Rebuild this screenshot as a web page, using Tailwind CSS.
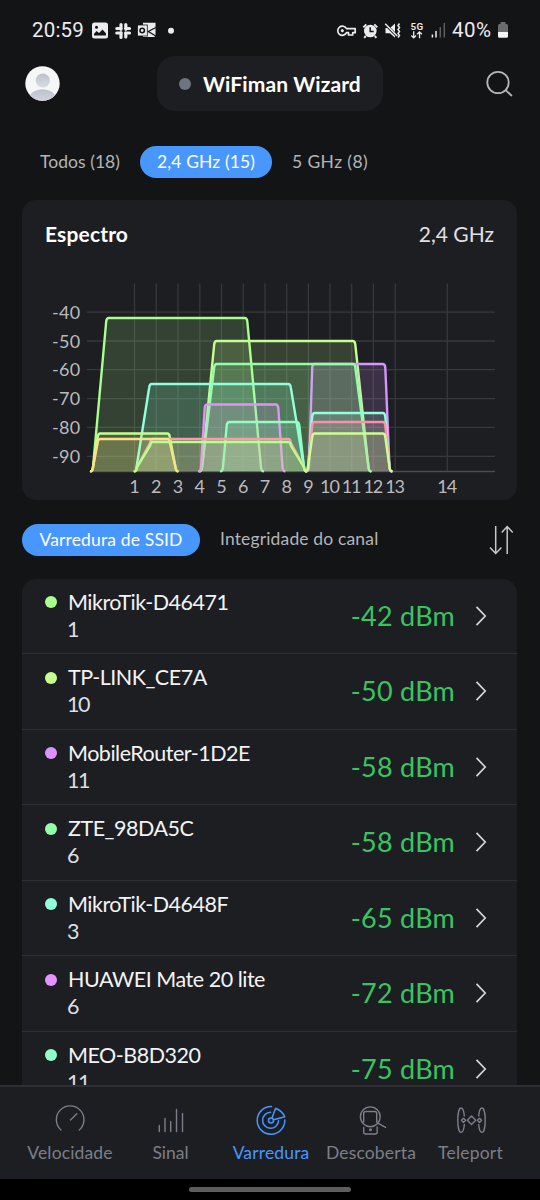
<!DOCTYPE html>
<html lang="pt">
<head>
<meta charset="utf-8">
<title>WiFiman</title>
<script src="https://cdn.jsdelivr.net/npm/@tailwindcss/browser@4"></script>
</head>
<body class="bg-black">
<div class="w-[540px] h-[1200px] overflow-hidden flex flex-col bg-[#131416] font-['Lato','Noto_Sans',sans-serif] text-[#f2f3f5]">

  <!-- Status bar -->
  <div class="h-14 shrink-0 flex items-center pt-1 pl-8 pr-[31px] font-['Roboto',sans-serif] text-[20.5px] text-[#ececee]">
    <span class="w-[53px] whitespace-nowrap tracking-[0.200px]">20:59</span>
    <svg class="ml-[6px] shrink-0" width="90" height="20" viewBox="91 20 90 20">
      <path fill="#ececee" fill-rule="evenodd" d="M94.500 22.500h11a2.500 2.500 0 0 1 2.500 2.500v11a2.500 2.500 0 0 1-2.500 2.500h-11a2.500 2.500 0 0 1-2.500-2.500v-11a2.500 2.500 0 0 1 2.500-2.500zM94 35.500h12v-2l-3.500-4-3.500 3.500-2.500-2-2.500 3z"/>
      <circle cx="96.500" cy="27.300" r="1.500" fill="#131416"/>
      <g stroke="#ececee" stroke-width="3.200" stroke-linecap="round" fill="none">
        <path d="M121 24.500v4.800M125.800 24.500v4.800M116.800 28.500h4.500M116.800 33h4.500M121 32.600v4.800M125.800 32.800v4.200M125.500 28.500h4M125.500 33h4"/>
      </g>
      <path fill="#ececee" d="M143 22.800h12.500v12.500l-1 1.800h-11.500z"/>
      <path d="M155.800 27.500l-7.500 4 7.500 4.500" stroke="#131416" stroke-width="1.300" fill="none"/>
      <rect x="137.500" y="25" width="9.800" height="11" fill="#ececee" stroke="#131416" stroke-width=".8"/>
      <circle cx="142.200" cy="30.500" r="2.200" fill="none" stroke="#131416" stroke-width="1.600"/>
      <circle cx="171" cy="30.700" r="3" fill="#ececee"/>
    </svg>
    <svg class="ml-auto shrink-0" width="112" height="20" viewBox="336 20 112 20" fill="none">
      <g stroke="#ececee" stroke-width="1.700" stroke-linejoin="round">
        <path d="M346.500 28.700a4.600 4.600 0 1 0 0 4h2v2.300h4.200v-2.300h2.500v-4z"/>
        <circle cx="342.300" cy="30.700" r="1.200" fill="#ececee" stroke-width=".8"/>
      </g>
      <circle cx="370.300" cy="31" r="6.300" fill="#ececee"/>
      <path d="M363.300 27.300l3-3M377.300 27.300l-3-3M365.800 36l-1.600 1.800M374.800 36l1.600 1.800" stroke="#ececee" stroke-width="1.900"/>
      <path d="M370.200 27.300v4.200h3.500" stroke="#131416" stroke-width="1.500"/>
      <path d="M385.500 28h4.500l5-4.500v14.300l-5-4.500h-4.500z" fill="#ececee"/>
      <path d="M384.500 23.500l12.500 12.500" stroke="#131416" stroke-width="2.600"/>
      <path d="M385.200 23.800l12 12.200" stroke="#ececee" stroke-width="1.500"/>
      <path d="M399.500 23.500l-1.500 2 1.500 2-1.500 2 1.500 2-1.500 2 1.500 2-1.500 2" stroke="#ececee" stroke-width="1.500"/>
      <text x="410.400" y="29.600" font-size="9.800" font-weight="600" textLength="12.800" fill="#ececee">5G</text>
      <path d="M413.700 31.300v6.200M411.300 35.500l2.400 2.400 2.400-2.400M419.500 38.200v-6M417.100 34.200l2.400-2.400 2.400 2.400" stroke="#ececee" stroke-width="1.300"/>
      <path d="M432.400 34.500v3M436 31v6.500" stroke="#ececee" stroke-width="1.500"/>
      <path d="M440.300 27v10.500M444.300 23v14.500" stroke="#5c5d60" stroke-width="1.500"/>
    </svg>
    <span class="w-[45px] ml-1 whitespace-nowrap tracking-[0.500px]">40%</span>
    <svg class="shrink-0" width="12" height="20" viewBox="497 20 12 20">
      <path d="M500.500 22h5v2h1a1.500 1.500 0 0 1 1.500 1.500v7.500h-10v-7.500a1.500 1.500 0 0 1 1.500-1.500h1z" fill="#6b6c6f"/>
      <path d="M498 32h10v4.300a1.500 1.500 0 0 1-1.500 1.500h-7a1.500 1.500 0 0 1-1.500-1.500z" fill="#f4f4f5"/>
    </svg>
  </div>

  <!-- Header -->
  <header class="h-[55px] shrink-0 flex items-center justify-between pl-[25px] pr-[27px]">
    <svg width="35" height="35" viewBox="0 0 35 35">
      <defs>
        <clipPath id="av"><circle cx="17.500" cy="17.500" r="17.200"/></clipPath>
        <linearGradient id="ag" x1="0" y1="0" x2="0" y2="1"><stop offset="0" stop-color="#bcc1cb"/><stop offset="1" stop-color="#d9dce3"/></linearGradient>
      </defs>
      <g clip-path="url(#av)">
        <rect width="35" height="35" fill="#f5f6f8"/>
        <circle cx="17.800" cy="14.500" r="7.100" fill="url(#ag)"/>
        <ellipse cx="17.500" cy="32" rx="13" ry="8.800" fill="url(#ag)"/>
      </g>
    </svg>
    <div class="w-[226px] h-[55px] ml-[7px] mr-[12px] rounded-[18px] bg-[#1d1e22] flex items-center pl-[22px] gap-3">
      <span class="size-3 rounded-full bg-[#6e7580]"></span>
      <span class="text-[21px] font-bold whitespace-nowrap tracking-[0.100px] text-white">WiFiman Wizard</span>
    </div>
    <svg width="28" height="28" viewBox="485 70 28 28" fill="none" stroke="#b4b6b9" stroke-width="1.800" stroke-linecap="round">
      <circle cx="498" cy="82.500" r="10.700"/><path d="M505.800 90.300l5.600 5.200"/>
    </svg>
  </header>

  <!-- Band filter -->
  <div class="h-[33px] mt-[34px] shrink-0 flex items-center pl-[22px] text-[17.500px] leading-[33px] text-[#b3b5b9] whitespace-nowrap">
    <span class="w-[118px] pl-[18px] tracking-[0.050px]">Todos (18)</span>
    <span class="w-[132px] h-[32px] leading-[32px] rounded-full bg-[#4797ff] text-white text-center tracking-[0.100px]">2,4 GHz (15)</span>
    <span class="ml-5 tracking-[0.400px]">5 GHz (8)</span>
  </div>

  <!-- Spectrum card -->
  <section class="mx-[22px] mt-[22px] w-[495px] h-[300px] shrink-0 rounded-[14px] bg-[#1d1e22] flex flex-col">
    <div class="h-[70px] flex items-center justify-between px-[23px] pb-[2px] leading-[30px]">
      <h2 class="text-[21px] font-bold text-white tracking-[0.150px]">Espectro</h2>
      <span class="text-[21px] text-[#e0e1e3]">2,4 GHz</span>
    </div>
    <svg width="495" height="230" viewBox="22 270 495 230" id="chart" fill="none"></svg>
  </section>

  <!-- View switch -->
  <div class="h-[33px] mt-[23px] shrink-0 flex items-center pl-[22px] pr-[26px] text-[17.500px] whitespace-nowrap">
    <span class="w-[178px] h-[32px] leading-[32px] rounded-full bg-[#4797ff] text-white text-center tracking-[0.150px]">Varredura de SSID</span>
    <span class="ml-5 text-[#b3b5b9] tracking-[0.150px]">Integridade do canal</span>
    <svg class="ml-auto" width="26" height="30" viewBox="487 524 26 30" fill="none" stroke="#c6c8cb" stroke-width="1.500">
      <path d="M494.700 525v27.500M489 546.500l5.700 6 5.700-6M506.200 553v-27.500M500.700 531.500l5.500-6 5.500 6"/>
    </svg>
  </div>

  <!-- Networks -->
  <main id="list" class="mx-[22px] mt-[22.500px] w-[495px] h-[506.500px] shrink-0 overflow-hidden rounded-t-[14px] bg-[#1d1e22]"></main>

  <!-- Bottom navigation -->
  <nav class="h-[94px] shrink-0 border-t-2 border-[#2d2f34] bg-[#1d1e22] flex pl-5 pr-5 text-[17.500px] leading-[22px] text-[#7b7f88] text-center whitespace-nowrap">
    <div class="w-[100px] flex flex-col items-center pt-4">
      <svg width="34" height="34" viewBox="53 1102 34 34" fill="none" stroke="currentColor" stroke-width="1.400" stroke-linecap="round"><path d="M61 1129a13.800 13.800 0 1 1 18.300 0M70.500 1119l6.300-6.300"/></svg>
      <span class="mt-[5px] tracking-[0.150px]">Velocidade</span>
    </div>
    <div class="w-[101px] flex flex-col items-center pt-4">
      <svg width="34" height="34" viewBox="153 1102 34 34" fill="none" stroke="currentColor" stroke-width="1.400" stroke-linecap="round"><path d="M158.300 1124.500v6M164 1117.500v13M169.700 1120.500v10M175.500 1108.500v22M181.500 1112.500v18"/></svg>
      <span class="mt-[5px]">Sinal</span>
    </div>
    <div class="w-[100px] flex flex-col items-center pt-4 text-[#4797ff]">
      <svg width="34" height="34" viewBox="253 1102 34 34" fill="none" stroke="currentColor" stroke-width="1.500" stroke-linecap="round" stroke-linejoin="round">
        <circle cx="270" cy="1119.500" r="2.500"/>
        <path d="M271 1117l3.600-9.800q6.500 2.500 9.200 8.600l-11.200 3M270.500 1105.600a13.800 13.800 0 1 0 13.300 13.400M269.600 1111.300a8 8 0 1 0 8 8.500"/>
      </svg>
      <span class="mt-[5px] tracking-[0.150px]">Varredura</span>
    </div>
    <div class="w-[100px] flex flex-col items-center pt-4">
      <svg width="34" height="34" viewBox="353 1102 34 34" fill="none" stroke="currentColor" stroke-width="1.400" stroke-linecap="round" stroke-linejoin="round">
        <circle cx="369.300" cy="1115.800" r="9.900"/><path d="M376.500 1121.800l8 4.500M362.700 1121v-8.500q0-2 2-2h9q2 0 2 2v8.500M362.700 1126.500v4.500q0 2 2 2h9.500q2 0 2-2v-5"/><circle cx="369.500" cy="1128.800" r=".8" fill="currentColor"/>
      </svg>
      <span class="mt-[5px] tracking-[0.150px]">Descoberta</span>
    </div>
    <div class="w-[99px] flex flex-col items-center pt-4">
      <svg width="34" height="34" viewBox="453 1102 34 34" fill="none" stroke="currentColor" stroke-width="1.400" stroke-linejoin="round">
        <path d="M463.400 1115.500q-.7-8.500-3.500-8.500c-1.800 0-3.100 5.500-3.100 12.200s1.300 12.300 3.100 12.300q2.800 0 3.500-8.500M477.600 1115.500q.7-8.500 3.500-8.500c1.800 0 3.100 5.500 3.100 12.200s-1.300 12.300-3.100 12.300q-2.800 0-3.500-8.500"/>
        <path d="M470.500 1115l4.200 4.300-4.200 4.300-4.200-4.300zM462.500 1117.200l2.100 2.100-2.100 2.100-2.100-2.100zM478.500 1117.200l2.100 2.100-2.100 2.100-2.100-2.100z"/>
      </svg>
      <span class="mt-[5px] tracking-[0.200px]">Teleport</span>
    </div>
  </nav>

  <!-- Gesture bar -->
  <div class="flex-1 bg-black flex justify-center pt-2"><span class="w-[162px] h-[5px] rounded-full bg-[#5e5e5e]"></span></div>
</div>

<script>
// Each network: name, channel, level in dBm, dot colour
const networks = [
  ['MikroTik-D46471', 1, -42, '#a8ff8f'],
  ['TP-LINK_CE7A', 10, -50, '#c6ff8f'],
  ['MobileRouter-1D2E', 11, -58, '#dd93ff'],
  ['ZTE_98DA5C', 6, -58, '#92ffa8'],
  ['MikroTik-D4648F', 3, -65, '#92ffdc'],
  ['HUAWEI Mate 20 lite', 6, -72, '#e493ff'],
  ['MEO-B8D320', 11, -75, '#92ffcb']
];
document.getElementById('list').innerHTML = networks.map(([name, ch, dbm, color]) => `
  <div class="h-[75.500px] border-b-[1.500px] border-[#2d2f34] flex items-center pl-[23px] pr-[30px]">
    <div class="flex flex-col text-[21.500px] leading-[27px] whitespace-nowrap">
      <div class="flex items-center gap-[11px]"><span class="size-3 rounded-full" style="background:${color}"></span><span class="tracking-[-0.480px]">${name}</span></div>
      <span class="pl-[22px] text-[#dedfe2] tracking-[-1.500px]">${ch}</span>
    </div>
    <span class="ml-auto text-[27px] leading-[30px] text-[#39c463] tracking-[0.250px] whitespace-nowrap">${dbm} dBm</span>
    <svg class="ml-5" width="12" height="22" viewBox="0 0 12 22" fill="none" stroke="#d3d5d8" stroke-width="1.700"><path d="M1.500 1.800l8.700 9.200-8.700 9.200"/></svg>
  </div>`).join('');

// Chart: grid, channel shapes [x0, x1, x2, x3, top y, colour], axis labels
const xs = [134.500,156.200,178,199.800,221.500,243.200,265,286.700,308.400,330,351.700,373.400,395.200,447.300];
const ys = [312.200,341,369.700,398.600,427.400,456.300];
const shapes = [
  [91,107,246.500,263,318,'#a8ff8f'],
  [200,215,354.500,370.500,341,'#c6ff8f'],
  [307,313,384.500,391.500,364,'#d993ff'],
  [200,215,354.500,370.500,364,'#92ffa8'],
  [134.500,150,290,306,384,'#92ffdc'],
  [199,205.500,277.500,284.500,404.500,'#e093f5'],
  [306,313,384.500,391.500,413,'#92ffdc'],
  [221,227.500,298.500,306,422,'#92ffc0'],
  [306,313,384.500,391.500,422,'#ff8fa8'],
  [91,98.500,169,177.500,433.500,'#c6ff8f'],
  [306,313,384.500,391.500,433.500,'#ccff8f'],
  [135,151,290,306,439,'#ff9b9f'],
  [91,98.500,169,177.500,439,'#ffdf8a'],
  [135,151,290,306,442,'#b8ff8f']
];
let s = '';
for (const x of xs) s += `<path d="M${x} 283.500V471.500" stroke="#36383c" stroke-width="1.300"/>`;
for (const y of ys) s += `<path d="M87 ${y}H495" stroke="#36383c" stroke-width="1.300"/>`;
s += '<path d="M91 471.500H495" stroke="#4a4c50" stroke-width="1.300"/>';
for (const [a,b,c,d,y,col] of shapes) {
  const p = `M${a} 471.200q1.500 0 2-4L${b-.8} ${y+3.500}q.4-3.500 2.500-3.500H${c-1.700}q2.100 0 2.500 3.500L${d-2} 467.200q.5 4 2 4`;
  s += `<path d="${p}z" fill="${col}" fill-opacity=".16"/><path d="${p}" stroke="${col}" stroke-width="2.400" stroke-linecap="round"/>`;
}
ys.forEach((y, i) => s += `<text x="80.500" y="${y+6.500}" text-anchor="end" font-size="18" letter-spacing=".3" fill="#b9bbbe">-${40+i*10}</text>`);
xs.forEach((x, i) => s += `<text x="${i > 8 ? x-.6 : x}" y="493" text-anchor="middle" font-size="18" letter-spacing="${i > 8 ? -1.1 : 0}" fill="#b9bbbe">${i+1}</text>`);
document.getElementById('chart').innerHTML = s;
</script>
</body>
</html>
